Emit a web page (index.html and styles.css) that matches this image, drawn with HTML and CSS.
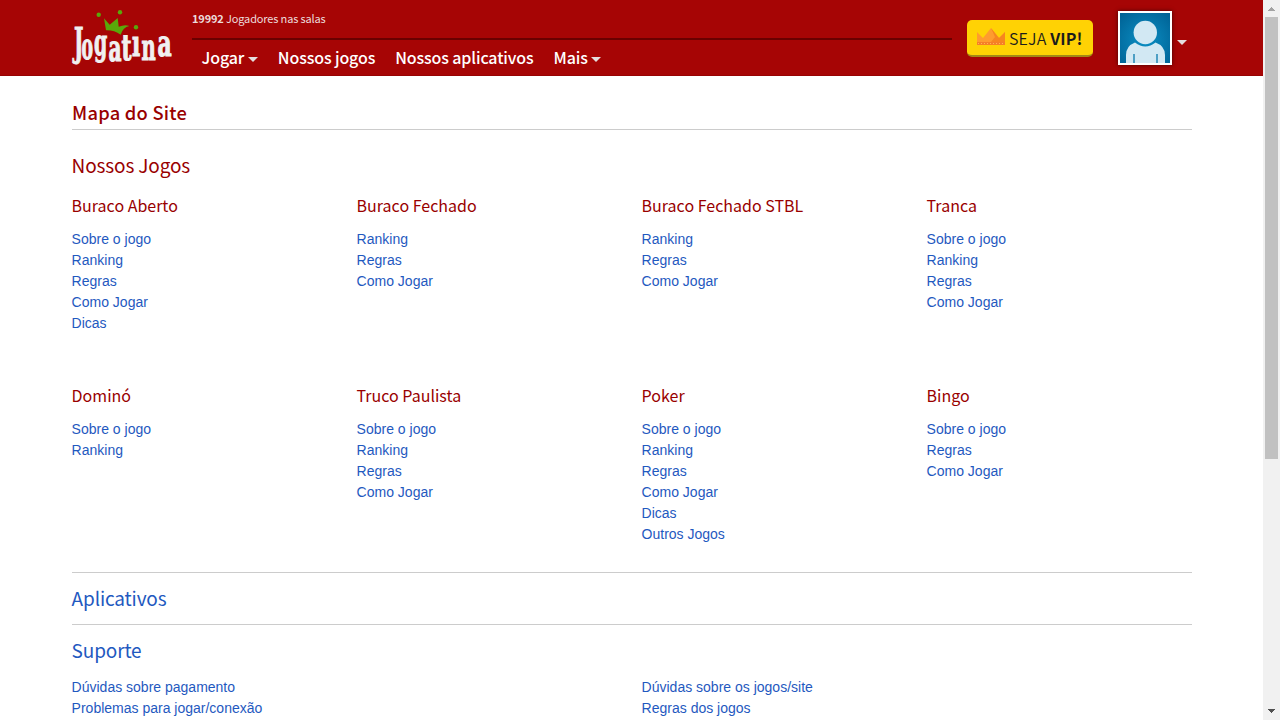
FILE: index.html
```html
<!DOCTYPE html>
<html lang="pt-BR">
<head>
<meta charset="utf-8">
<title>Mapa do Site - Jogatina</title>
<link rel="stylesheet" href="styles.css">
</head>
<body>
<div class="window">
<div class="page">
<header class="header">
  <a class="logo"><svg width="104" height="64" viewBox="70 6 104 64">
    <g fill="#5aa80a"><path d="M104 18.3L109.7 24.7L117.7 18L118.7 26.7Q125 24 129.3 26Q123 27 120.7 34.7Q114 30 106 30.3Z"/><circle cx="98.7" cy="14.7" r="2.2"/><circle cx="120" cy="12.2" r="2.2"/><circle cx="136" cy="27.3" r="2.2"/></g>
    <g class="logo-letters">
      <text transform="translate(74 56) scale(.58 1.01)" font-size="38">J</text>
      <text transform="translate(81.500 58.500) scale(.6 1.16)" font-size="32">o</text>
      <text transform="translate(94 54.500) scale(.62 1.05)" font-size="34">g</text>
      <text transform="translate(108.500 61) scale(.7 1.15)" font-size="32">a</text>
      <text transform="translate(121.500 60) scale(.75 1.1)" font-size="32">t</text>
      <text transform="translate(132 55.500) scale(.75 1.18)" font-size="32">ı</text>
      <text transform="translate(141.500 59.500) scale(.68 1.15)" font-size="32">n</text>
      <text transform="translate(157.500 56) scale(.76 1.15)" font-size="32">a</text>
    </g>
  </svg></a>
  <div class="center">
    <p class="players"><b>19992</b> Jogadores nas salas</p>
    <nav class="nav"><a>Jogar<i class="caret"></i></a><a>Nossos jogos</a><a>Nossos aplicativos</a><a>Mais<i class="caret"></i></a></nav>
  </div>
  <a class="vip"><svg width="28" height="18" viewBox="0 0 28 18"><path fill="#ff9c2e" d="M0 4L6 10L14 0L22 10L28 4V17H0Z"/><path fill="#f7861f" d="M14 0L22 10L28 4V14H20L14 14L18 9Z"/><path fill="#f57f28" d="M0 14H28V17H0Z"/><path stroke="#ffb650" stroke-dasharray="1 2" d="M1 15.5H28"/></svg><span class="vip-text">SEJA <b>VIP!</b></span></a>
  <a class="avatar"><svg width="50" height="50" viewBox="0 0 50 50"><defs><radialGradient id="sky" cy=".55" r=".7"><stop stop-color="#0b8fc4"/><stop offset="1" stop-color="#006396"/></radialGradient></defs><path fill="url(#sky)" d="M0 0H50V50H0Z"/><g fill="#d2e8f3"><circle cx="25.3" cy="19.5" r="11.7"/><path d="M6 50V42Q6 33 15 29.5Q25.300 37.500 35.500 29.500Q45 33 45 42V50Z"/></g><path stroke="#0879ac" stroke-width="1.300" d="M14 41V50M37 41V50"/></svg></a>
  <i class="caret user-caret"></i>
</header>
<main class="content">
  <h1>Mapa do Site</h1>
  <h2>Nossos Jogos</h2>
  <div class="games">
    <section><h3>Buraco Aberto</h3><ul><li>Sobre o jogo</li><li>Ranking</li><li>Regras</li><li>Como Jogar</li><li>Dicas</li></ul></section>
    <section><h3>Buraco Fechado</h3><ul><li>Ranking</li><li>Regras</li><li>Como Jogar</li></ul></section>
    <section><h3>Buraco Fechado STBL</h3><ul><li>Ranking</li><li>Regras</li><li>Como Jogar</li></ul></section>
    <section><h3>Tranca</h3><ul><li>Sobre o jogo</li><li>Ranking</li><li>Regras</li><li>Como Jogar</li></ul></section>
    <section><h3>Dominó</h3><ul><li>Sobre o jogo</li><li>Ranking</li></ul></section>
    <section><h3>Truco Paulista</h3><ul><li>Sobre o jogo</li><li>Ranking</li><li>Regras</li><li>Como Jogar</li></ul></section>
    <section><h3>Poker</h3><ul><li>Sobre o jogo</li><li>Ranking</li><li>Regras</li><li>Como Jogar</li><li>Dicas</li><li>Outros Jogos</li></ul></section>
    <section><h3>Bingo</h3><ul><li>Sobre o jogo</li><li>Regras</li><li>Como Jogar</li></ul></section>
  </div>
  <h2 class="ruled">Aplicativos</h2>
  <h2 class="ruled">Suporte</h2>
  <div class="support"><ul><li>Dúvidas sobre pagamento</li><li>Problemas para jogar/conexão</li></ul><ul><li>Dúvidas sobre os jogos/site</li><li>Regras dos jogos</li></ul></div>
</main>
</div>
<div class="scrollbar"><svg width="17" height="17" shape-rendering="crispEdges"><path fill="#a3a3a3" d="M5 11L8.500 7L12 11Z"/></svg><div class="thumb"></div><svg class="down" width="17" height="17" shape-rendering="crispEdges"><path fill="#505050" d="M5 6L12 6L8.500 10Z"/></svg></div>
</div>
</body>
</html>
```
FILE: styles.css
```css
* { box-sizing: border-box; }
body { margin: 0; background: #fff; font: 14px/21px "Liberation Sans", Arial, sans-serif; }
h1, h2, h3, p, ul { margin: 0; padding: 0; }
ul { list-style: none; }
.window { display: flex; height: 720px; overflow: hidden; }
.page { width: 1263px; height: 720px; overflow: hidden; }
.header { display: flex; align-items: flex-start; height: 76px; padding-left: 70px; background: #a60505; border-bottom: 1px solid #980202; }
.header, h1, h2, h3 { font-family: "Noto Sans CJK SC", "Noto Sans CJK JP", sans-serif; }
.logo { width: 104px; height: 64px; margin-top: 6px; }
.logo svg { display: block; }
.logo-letters { font-family: "DejaVu Serif Condensed", "DejaVu Serif", serif; font-weight: bold; fill: #f0f0f0; stroke: #f0f0f0; stroke-width: .9; }
.center { width: 760px; margin-left: 18px; }
.players { height: 40px; padding-top: 8px; border-bottom: 2px solid #6a0000; color: #ecdcdc; font-size: 11px; letter-spacing: -.15px; line-height: 20px; }
.nav { display: flex; gap: 20px; padding: 5px 10px 0 9.6px; color: #fff; font-size: 16px; letter-spacing: -.13px; font-weight: 500; line-height: 24px; white-space: nowrap; }
.caret { display: inline-block; border: 5px solid transparent; border-top-color: #e4dede; border-bottom: 0; margin-left: 3.6px; vertical-align: 2px; }
.vip { display: flex; width: 126px; height: 37px; margin: 20px 0 0 15px; padding: 8px 0 0 10px; border-radius: 5px; border-bottom: 2px solid #a28916; background: #ffd204; color: #1c1c1c; }
.vip-text { margin: -2px 0 0 4px; font-size: 16px; letter-spacing: .15px; line-height: 24px; font-weight: 350; white-space: nowrap; }
.vip-text b { font-weight: 700; }
.avatar { width: 54px; height: 54px; margin: 11px 0 0 25px; border: 2px solid #fff; box-shadow: 0 0 4px rgba(0,0,0,.6); }
.avatar svg { display: block; }
.user-caret { margin: 40px 0 0 5px; }
.content { width: 1120px; margin-left: 72px; }
h1 { height: 54px; padding-top: 21px; border-bottom: 1px solid #ccc; color: #900; font-size: 18.3px; letter-spacing: .25px; line-height: 30px; font-weight: 500; }
h2 { height: 64px; padding-top: 20px; color: #900; font-size: 19px; letter-spacing: -.15px; line-height: 30px; font-weight: 400; }
h3 { height: 35px; color: #900; font-size: 16px; line-height: 22px; font-weight: 400; }
h2, h3 { text-indent: -.4px; }
.games { display: grid; grid-template-columns: repeat(4, 285px); grid-template-rows: 190px 188px; width: 1140px; color: #1f59c0; }
.games ul, .support ul { margin-left: -.4px; }
.ruled { height: 52px; padding-top: 10px; border-top: 1px solid #ccc; color: #1f59c0; }
.support { display: grid; grid-template-columns: 570px 550px; padding-top: 1px; color: #1f59c0; }
.scrollbar { display: flex; flex-direction: column; width: 17px; height: 720px; background: #f1f1f1; }
.thumb { width: 13px; height: 442px; margin-left: 2px; background: #c1c1c1; }
.down { margin-top: auto; }
```
